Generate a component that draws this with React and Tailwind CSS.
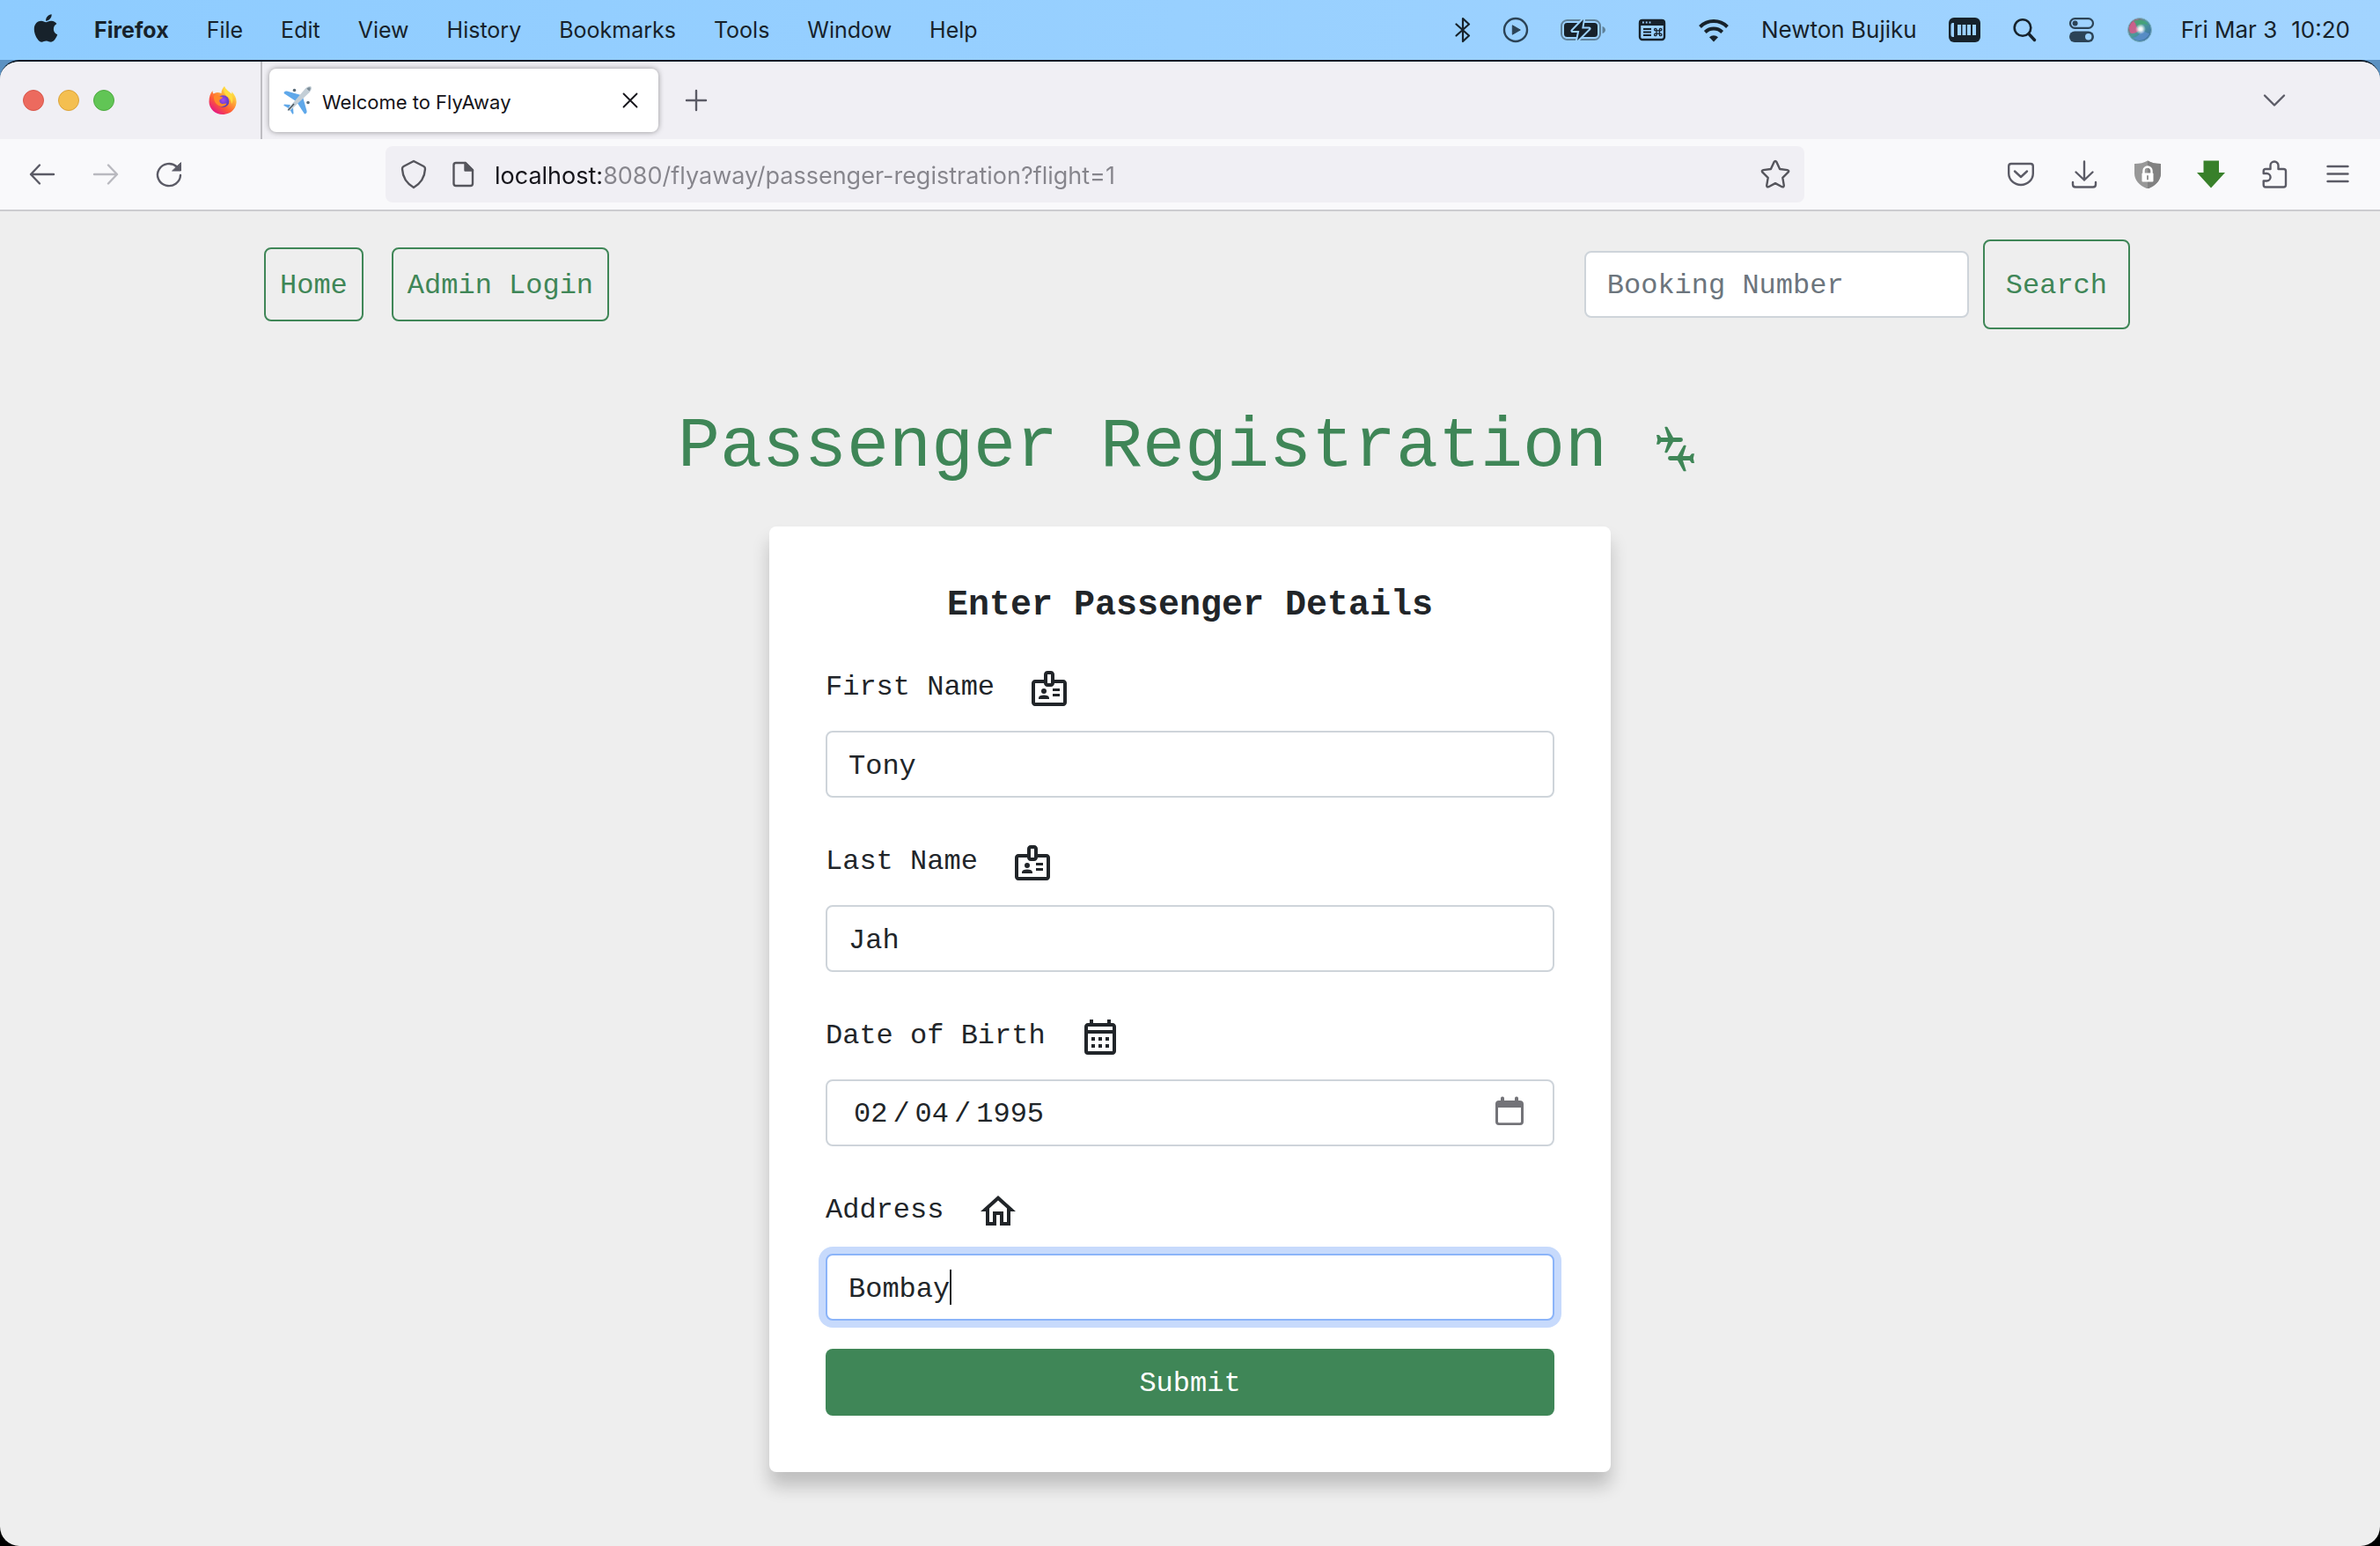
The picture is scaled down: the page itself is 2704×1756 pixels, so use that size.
import React from "react";
import { FaApple } from "react-icons/fa";
import { MdOutlineBadge, MdOutlineCalendarMonth, MdOutlineHome } from "react-icons/md";

const mono = "font-['Liberation_Mono',monospace]";

/* ---------- menu bar ---------- */

const menus = ["File", "Edit", "View", "History", "Bookmarks", "Tools", "Window", "Help"];

function BluetoothIcon() {
  return (
    <svg width="18" height="30" viewBox="0 0 18 30" fill="none" stroke="#17222b" strokeWidth="2.2" strokeLinejoin="round" strokeLinecap="round">
      <path d="M1.5 8.5 16 21.5 9 28V2l7 6.5L1.5 21.5" />
    </svg>
  );
}

function PlayIcon() {
  return (
    <svg width="30" height="30" viewBox="0 0 30 30">
      <circle cx="15" cy="15" r="13" fill="none" stroke="#2c4356" strokeWidth="2.4" />
      <path d="M11.3 9.8v10.4l9-5.2z" fill="#2c4356" stroke="#2c4356" strokeWidth="1" strokeLinejoin="round" />
    </svg>
  );
}

function BatteryIcon() {
  return (
    <svg width="52" height="28" viewBox="0 0 52 28">
      <rect x="1" y="3" width="44" height="22" rx="6.5" fill="none" stroke="#5f8199" strokeWidth="2" />
      <path d="M47.5 10v8c2-.6 3.5-2.1 3.5-4s-1.5-3.4-3.5-4z" fill="#5f8199" />
      <rect x="4" y="6" width="38" height="16" rx="3.5" fill="#17222b" />
      <path d="M26 2 13.500 15h7.800L19 26 32.500 12.500h-8.300z" fill="#17222b" stroke="#9dd2ff" strokeWidth="4" strokeLinejoin="round" />
      <path d="M26 2 13.500 15h7.800L19 26 32.500 12.500h-8.300z" fill="#17222b" />
    </svg>
  );
}

function ShortcutsIcon() {
  return (
    <svg width="32" height="26" viewBox="0 0 32 26">
      <rect x="2" y="2" width="28" height="22" rx="3" fill="none" stroke="#17222b" strokeWidth="2.4" />
      <path d="M1 8V4.500A3.500 3.500 0 0 1 4.500 1h23A3.500 3.500 0 0 1 31 4.500V8z" fill="#17222b" />
      <path d="M5 4.500h1.800M8.800 4.500h1.800M12.600 4.500h1.800" stroke="#9dd2ff" strokeWidth="1.800" />
      <path d="M6 12h9M6 15.500h9M6 19h9" stroke="#17222b" strokeWidth="1.800" />
      <g fill="none" stroke="#17222b" strokeWidth="1.300">
        <rect x="21" y="13.800" width="3.400" height="3.400" />
        <circle cx="19.800" cy="12.600" r="1.300" />
        <circle cx="25.600" cy="12.600" r="1.300" />
        <circle cx="19.800" cy="18.400" r="1.300" />
        <circle cx="25.600" cy="18.400" r="1.300" />
      </g>
    </svg>
  );
}

function WifiIcon() {
  return (
    <svg width="36" height="28" viewBox="0 0 36 28" fill="none" stroke="#17222b" strokeWidth="4">
      <path d="M2.500 10.500a22 22 0 0 1 31 0" />
      <path d="M8.300 16.500a14 14 0 0 1 19.400 0" />
      <path d="M18 27.500l5-5.200a7.200 7.200 0 0 0-10 0z" fill="#17222b" stroke="none" />
    </svg>
  );
}

function PianoIcon() {
  return (
    <svg width="36" height="30" viewBox="0 0 36 30">
      <rect x="0" y="1" width="36" height="28" rx="6" fill="#17222b" />
      <path d="M6 7H4.500Q2.500 7 2.500 10v10q0 3 2 3H6z" fill="#9dd2ff" />
      <path d="M10 9h4v12h-4zM15.500 9h4v12h-4zM21 9h4v12h-4zM27 9h4v12h-4z" fill="#9dd2ff" />
    </svg>
  );
}

function SpotlightIcon() {
  return (
    <svg width="28" height="28" viewBox="0 0 28 28" fill="none" stroke="#17222b" strokeLinecap="round">
      <circle cx="12" cy="11.500" r="9.300" strokeWidth="2.600" />
      <path d="M19 18.500l6.500 7" strokeWidth="3.400" />
    </svg>
  );
}

function ControlCenterIcon() {
  return (
    <svg width="30" height="30" viewBox="0 0 30 30">
      <rect x="2" y="2.200" width="26" height="10.600" rx="5.300" fill="none" stroke="#2c4356" strokeWidth="2.200" />
      <circle cx="7.600" cy="7.500" r="3" fill="#2c4356" />
      <rect x="1" y="16.500" width="28" height="12.500" rx="6.200" fill="#2c4356" />
      <circle cx="22.700" cy="22.700" r="3.700" fill="#9dd2ff" />
    </svg>
  );
}

function SiriIcon() {
  return (
    <svg width="30" height="30" viewBox="0 0 30 30">
      <defs>
        <linearGradient id="siriBase" x1="0" y1="0" x2="1" y2="1">
          <stop offset="0" stopColor="#b0455f" />
          <stop offset="0.450" stopColor="#4c9c9a" />
          <stop offset="1" stopColor="#3a64a8" />
        </linearGradient>
        <radialGradient id="siriGlow">
          <stop offset="0" stopColor="#fff" />
          <stop offset="0.350" stopColor="#fff" stopOpacity="0.850" />
          <stop offset="1" stopColor="#fff" stopOpacity="0" />
        </radialGradient>
      </defs>
      <circle cx="15" cy="15" r="13.500" fill="url(#siriBase)" stroke="#7fb3c8" strokeWidth="1" />
      <path d="M3 13c1-6 6-10 11-10-5 3-5 8 1 12-4 4-9 5-11 3z" fill="#d85c8c" opacity="0.850" />
      <path d="M8 5c6-3 14-1 17 5-5-3-9-2-11 2z" fill="#43a574" opacity="0.850" />
      <path d="M7 24c5-1 9-4 10-9 4 2 7 4 9 4-3 7-12 11-19 5z" fill="#5a8ecb" opacity="0.850" />
      <circle cx="16" cy="14" r="6" fill="url(#siriGlow)" />
    </svg>
  );
}

function MenuBar() {
  return (
    <header className="flex h-17 items-center justify-between bg-linear-to-r from-[#8eccff] to-[#a2d4ff] pl-[38px] pr-[34px] font-[Inter,sans-serif] text-[25px] leading-8 whitespace-nowrap text-[#17222b]">
      <nav aria-label="Menu bar" className="flex items-center gap-[43px]">
        <FaApple className="-mt-1 h-9 w-[28px]" fill="#17222b" />
        <button className="-ml-0.5 font-bold">Firefox</button>
        {menus.map((m) => (
          <button key={m}>{m}</button>
        ))}
      </nav>
      <div className="flex items-center gap-9 text-[26px]">
        <BluetoothIcon />
        <PlayIcon />
        <BatteryIcon />
        <ShortcutsIcon />
        <WifiIcon />
        <span>Newton Bujiku</span>
        <PianoIcon />
        <SpotlightIcon />
        <ControlCenterIcon />
        <SiriIcon />
        <time className="-ml-1 flex gap-4">
          <span>Fri Mar 3</span>
          <span>10:20</span>
        </time>
      </div>
    </header>
  );
}

/* ---------- browser chrome ---------- */

function FirefoxLogo() {
  return (
    <svg width="34" height="34" viewBox="0 0 34 34">
      <defs>
        <linearGradient id="ffBody" x1="0.850" y1="0.100" x2="0.200" y2="0.950">
          <stop offset="0" stopColor="#fff44f" />
          <stop offset="0.350" stopColor="#ffa436" />
          <stop offset="0.650" stopColor="#ff5a36" />
          <stop offset="1" stopColor="#e31587" />
        </linearGradient>
        <radialGradient id="ffGlobe" cx="0.500" cy="0.400" r="0.600">
          <stop offset="0" stopColor="#a84bf0" />
          <stop offset="1" stopColor="#4a38b8" />
        </radialGradient>
      </defs>
      <path d="M19 1c1 4 6 6 8 9 .5-1 .4-2 .2-3 4 4 5.800 8 5.300 13C31.500 28 25 33 17 33S1.500 27 1.500 18.500C1.500 13 3 9 5.500 6c0 1.500.3 2.500 1 3.500C8 8.500 9.500 8 11 8c1.500 0 3 .3 4.500 1C15.500 5.500 17 3 19 1z" fill="url(#ffBody)" />
      <circle cx="17.500" cy="18" r="6.800" fill="url(#ffGlobe)" />
      <path d="M7 12c2-1.500 4-1 5.500.5 1.500 0 3.500.2 4.500 1-.5 1.500-2.500 2-3.500 3-.5 2 .5 4 3 4.500 2 .3 3-1 5-.5-1 3-5.500 4.500-9 2.500-4-2-6-6.500-5.500-11z" fill="#ff8a2b" />
      <path d="M19 1c1 4 6 6 8 9 2 4 2 8 0 11-.2-4-2-6.500-5-8.500C19 10 17.500 6 19 1z" fill="#ffdc3e" />
    </svg>
  );
}

function PlaneFavicon() {
  return (
    <svg width="32" height="32" viewBox="0 0 32 32">
      <path d="M20 10 4 5.500Q2 5 1 6.500L.5 8l13 8.500z" fill="#5fa8ea" />
      <path d="M22 12l4.500 16q.5 2-1 3L24 31.500 15.500 18.500z" fill="#5fa8ea" />
      <path d="M8 21l-7-.5-.8 1.200L6 25zM11 24l.5 7-1.200.8L7 26z" fill="#5fa8ea" />
      <path d="M31.500.5c1 1.500 0 4.500-2 6.500L9 26.500c-1.500 1.300-3 2-4 1.500s0-2.500 1.500-4L25 2.500C27 .500 30-.500 31.500.5z" fill="#c3ced6" />
      <path d="M30.500 1.500c-1.500-.5-3 .2-4 1.200l2.800 2.800c1-1 1.700-2.500 1.200-4z" fill="#7a8b96" />
      <path d="M5.500 27 12 20" stroke="#4a555c" strokeWidth="1.400" />
      <circle cx="12.500" cy="4.500" r="1.800" fill="#596b78" />
      <circle cx="28" cy="18.500" r="1.800" fill="#596b78" />
    </svg>
  );
}

function TabStrip() {
  return (
    <div className="flex h-22 items-stretch bg-[#f0eff4]">
      <div className="flex w-[298px] items-center border-r-2 border-[#bdbcc1] pl-[26px]">
        <div className="flex flex-1 gap-4">
          <button aria-label="Close window" className="size-6 rounded-full border border-[#d8584c] bg-[#ec6a5e]" />
          <button aria-label="Minimize window" className="size-6 rounded-full border border-[#dba33a] bg-[#f4bf50]" />
          <button aria-label="Zoom window" className="size-6 rounded-full border border-[#4eaa41] bg-[#61c555]" />
        </div>
        <button aria-label="Firefox View" className="mr-[26px]">
          <FirefoxLogo />
        </button>
      </div>
      <div className="flex flex-1 items-center pl-2">
        <div role="tab" aria-selected="true" className="flex h-18 w-[442px] items-center rounded-lg bg-white pl-4 shadow-[0_0_6px_rgba(0,0,0,0.4)]">
          <PlaneFavicon />
          <span className="ml-3 flex-1 pt-1 font-[Inter,sans-serif] text-[22px] leading-7 text-[#15141a]">Welcome to FlyAway</span>
          <button aria-label="Close tab" className="mr-[22px]">
            <svg width="20" height="20" viewBox="0 0 20 20" stroke="#15141a" strokeWidth="1.800" strokeLinecap="round">
              <path d="M2.500 2.500l15 15M17.500 2.500l-15 15" />
            </svg>
          </button>
        </div>
        <button aria-label="New tab" className="ml-[30px]">
          <svg width="26" height="26" viewBox="0 0 26 26" stroke="#5b5b66" strokeWidth="2.400" strokeLinecap="round">
            <path d="M13 2v22M2 13h22" />
          </svg>
        </button>
        <button aria-label="List all tabs" className="ml-auto mr-[106px]">
          <svg width="28" height="16" viewBox="0 0 28 16" fill="none" stroke="#5b5b66" strokeWidth="2.400" strokeLinecap="round" strokeLinejoin="round">
            <path d="M3 2.500l11 11 11-11" />
          </svg>
        </button>
      </div>
    </div>
  );
}

function ToolButton({ label, children }) {
  return (
    <button aria-label={label} className="flex size-18 items-center justify-center">
      <svg width="32" height="32" viewBox="0 0 32 32" fill="none" stroke="#5b5b66" strokeWidth="2.400" strokeLinecap="round" strokeLinejoin="round">
        {children}
      </svg>
    </button>
  );
}

function NavBar() {
  return (
    <div className="flex h-[82px] items-center border-b-2 border-[#cccccf] bg-[#f9f9fb] px-3">
      <div className="flex w-[426px]">
        <ToolButton label="Back">
          <path d="M29 16H3.500M13 5.500 3 16l10 10.500" />
        </ToolButton>
        <div className="opacity-40">
          <ToolButton label="Forward">
            <path d="M3 16h25.500M19 5.500 29 16 19 26.500" />
          </ToolButton>
        </div>
        <ToolButton label="Reload">
          <path d="M29 17a13 12.500 0 1 1-4-9.500" />
          <path d="M29.500 3v9h-9.500z" fill="#5b5b66" strokeWidth="1" />
        </ToolButton>
      </div>
      <div className="flex h-16 flex-1 items-center rounded-lg bg-[#f0eff4] px-4">
        <svg width="32" height="34" viewBox="0 0 32 34" fill="none" stroke="#55555c" strokeWidth="2.400" strokeLinejoin="round">
          <path d="M16 2l11.500 6q1.700 1 1.500 3c-.5 9-4.500 16-13 21C7.500 27 3.500 20 3 11q-.2-2 1.500-3z" />
        </svg>
        <svg className="ml-6" width="32" height="32" viewBox="0 0 32 32" fill="none" stroke="#55555c" strokeWidth="2.400" strokeLinejoin="round">
          <path d="M8 3h11l8 8v15.500q0 2.500-2.500 2.500H8q-2.500 0-2.500-2.500v-21Q5.500 3 8 3z" />
          <path d="M18.500 3v8.500H27z" fill="#55555c" />
        </svg>
        <input
          aria-label="Address"
          defaultValue="localhost:8080/flyaway/passenger-registration?flight=1"
          className="ml-5 h-12 flex-1 bg-[linear-gradient(90deg,#15141a_124px,#86858c_124px)] bg-clip-text pt-0.5 font-[Inter,sans-serif] text-[27px] leading-9 text-transparent outline-none"
        />
        <button aria-label="Bookmark this page">
          <svg width="34" height="34" viewBox="0 0 34 34" fill="none" stroke="#55555c" strokeWidth="2.400" strokeLinejoin="round">
            <path d="M15.600 3q1.400-2.200 2.800 0l3.700 8 8.600 1.100q2.400.7.900 2.600l-6.300 6.200 1.500 8.700q0 2.400-2.200 1.600L17 27.100l-7.600 4.100q-2.200.8-2.200-1.600l1.500-8.700-6.300-6.200q-1.500-1.900.9-2.600l8.600-1.100z" />
          </svg>
        </button>
      </div>
      <div className="ml-[210px] flex">
        <ToolButton label="Save to Pocket">
          <path d="M5 4h22q2.800 0 2.800 2.800V15a13.800 13 0 0 1-27.600 0V6.800Q2.200 4 5 4z" />
          <path d="M9 12.500l7 6.500 7-6.500" />
        </ToolButton>
        <ToolButton label="Downloads">
          <path d="M16 1.500v21M6.500 13.500l9.500 9 9.500-9M3 25v2.500Q3 30.500 6 30.500h20q3 0 3-3V25" />
        </ToolButton>
        <ToolButton label="Privacy extension">
          <path d="M16 .5c4 2.500 9 3.500 15 3.500v11c0 8-6 14-15 17.500C7 29 1 23 1 15V4C7 4 12 3 16 .5z" fill="#989898" stroke="none" />
          <path d="M16 .5c4 2.500 9 3.500 15 3.500v11c0 8-6 14-15 17.500z" fill="#818181" stroke="none" />
          <path d="M11.500 15v-3a4.500 4.500 0 0 1 9 0v3" stroke="#fff" />
          <rect x="9.500" y="14.500" width="13" height="10" rx="1" fill="#fff" stroke="none" />
          <path d="M16 18v3.500" stroke="#888" strokeWidth="1.800" />
        </ToolButton>
        <ToolButton label="Download helper">
          <path d="M7.500 .5h17.500V14h7L16 31.500 0 14h7.500z" fill="#38802a" stroke="none" />
        </ToolButton>
        <ToolButton label="Extensions">
          <path d="M6 10h5.500V6a4.500 4.500 0 0 1 9 0v4h6q2.500 0 2.500 2.500V28q0 2.500-2.500 2.500H6Q3.700 30.500 3.700 28v-4.500h3.600a4 4 0 0 0 0-8.500H3.700v-2.500Q3.700 10 6 10z" />
        </ToolButton>
        <ToolButton label="Application menu">
          <path d="M4.500 7h23M4.500 15.500h23M4.500 24h23" />
        </ToolButton>
      </div>
    </div>
  );
}

/* ---------- page ---------- */

const inputBase =
  "block h-19 w-full rounded-lg border-2 bg-white px-6 pt-1 text-[32px] leading-[48px] text-[#212529] outline-none";

function ConnectingPlanes() {
  return (
    <svg width="52" height="52" viewBox="0 0 52 52" fill="currentColor">
      <path
        id="plane"
        d="M0 10h2.600q.5 0 .8.500L5.200 13H13L9.400 1.600Q9.200.7 10 .7h1.600q.6 0 .9.500L19 13h8.500a2.400 2.400 0 0 1 0 4.900H19L12.500 29.600q-.3.600-.9.600H10q-.8 0-.6-.9L13 17.900H5.200l-1.800 2.400q-.3.500-.8.500H0l1.200-5.400z"
      />
      <use href="#plane" transform="rotate(180 21.500 26)" />
    </svg>
  );
}

function Field({ id, label, icon: Icon, children }) {
  return (
    <div className="flex flex-col gap-6">
      <label htmlFor={id} className="flex h-12 gap-[38px] text-[#212529]">
        <span className="leading-[46px]">{label}</span>
        <Icon className="size-12" />
      </label>
      {children}
    </div>
  );
}

function PageNav() {
  return (
    <nav className="flex items-center justify-between pl-[300px] pr-[284px] pt-8">
      <div className="flex gap-8 text-[#3f8657]">
        <a href="#home" className="rounded-lg border-2 border-[#3f8657] px-4 pt-[18px] pb-[14px]">Home</a>
        <a href="#admin" className="rounded-lg border-2 border-[#3f8657] px-4 pt-[18px] pb-[14px]">Admin Login</a>
      </div>
      <form className="flex items-center gap-4" onSubmit={(e) => e.preventDefault()}>
        <input
          aria-label="Booking Number"
          placeholder="Booking Number"
          className="h-19 w-[437px] rounded-lg border-2 border-[#ced4da] bg-white px-6 pt-0.5 outline-none placeholder:text-[#6c757d]"
        />
        <button className="h-[102px] rounded-lg border-2 border-[#3f8657] px-6 pt-1 text-[#3f8657]">Search</button>
      </form>
    </nav>
  );
}

function RegistrationCard() {
  return (
    <form
      onSubmit={(e) => e.preventDefault()}
      className="mx-auto mt-11 flex w-[956px] flex-col rounded-lg bg-white p-16 shadow-[0_16px_20px_rgba(0,0,0,0.2)]"
    >
      <h2 className="text-center text-[40px] leading-[52px] font-bold text-[#212529]">Enter Passenger Details</h2>
      <div className="mt-11 flex flex-col gap-[50px]">
        <Field id="first" label="First Name" icon={MdOutlineBadge}>
          <input id="first" defaultValue="Tony" className={`${inputBase} border-[#ced4da]`} />
        </Field>
        <Field id="last" label="Last Name" icon={MdOutlineBadge}>
          <input id="last" defaultValue="Jah" className={`${inputBase} border-[#ced4da]`} />
        </Field>
        <Field id="dob" label="Date of Birth" icon={MdOutlineCalendarMonth}>
          <div className="relative">
            <input
              id="dob"
              type="date"
              defaultValue="1995-02-04"
              className={`${inputBase} border-[#ced4da] pl-[29px] [&::-webkit-calendar-picker-indicator]:opacity-0 [&::-webkit-datetime-edit-text]:px-[5px]`}
            />
            <svg className="pointer-events-none absolute top-[19px] right-[34px]" width="34" height="34" viewBox="0 0 34 34">
              <path d="M7 5V2.500a2 2 0 0 1 4 0V5h12V2.500a2 2 0 0 1 4 0V5h1.500Q33 5 33 9v20q0 4-4 4H5q-4 0-4-4V9q0-4 4-4zM4 13v16q0 1.200 1.200 1.200h23.600Q30 30.200 30 29V13z" fill="#737378" />
            </svg>
          </div>
        </Field>
        <Field id="address" label="Address" icon={MdOutlineHome}>
          <div className="relative">
            <input
              id="address"
              defaultValue="Bombay"
              className={`${inputBase} border-[#8bb4f9] shadow-[0_0_0_8px_#c7dafc]`}
            />
            <span className="absolute top-[18px] left-[141px] h-10 w-0.5 bg-[#212529]" />
          </div>
        </Field>
      </div>
      <button className="mt-8 h-19 rounded-lg bg-[#3f8657] pt-1 text-white">Submit</button>
    </form>
  );
}

export default function App() {
  return (
    <div className="flex min-h-screen flex-col bg-linear-to-b from-[#5b91c2] from-50% to-black to-50%">
      <MenuBar />
      <div className="flex flex-1 flex-col overflow-hidden rounded-[22px] border-t-2 border-[#0d1a26] bg-[#eeeeee]">
        <TabStrip />
        <NavBar />
        <main className={`flex flex-1 flex-col pb-[84px] text-[32px] leading-[48px] ${mono}`}>
          <PageNav />
          <h1 className="mt-[84px] flex h-24 items-end justify-center gap-14 text-[80px] leading-[92px] text-[#3f8657]">
            <span>Passenger Registration</span>
            <span className="pb-[18px]">
              <ConnectingPlanes />
            </span>
          </h1>
          <RegistrationCard />
        </main>
      </div>
    </div>
  );
}
